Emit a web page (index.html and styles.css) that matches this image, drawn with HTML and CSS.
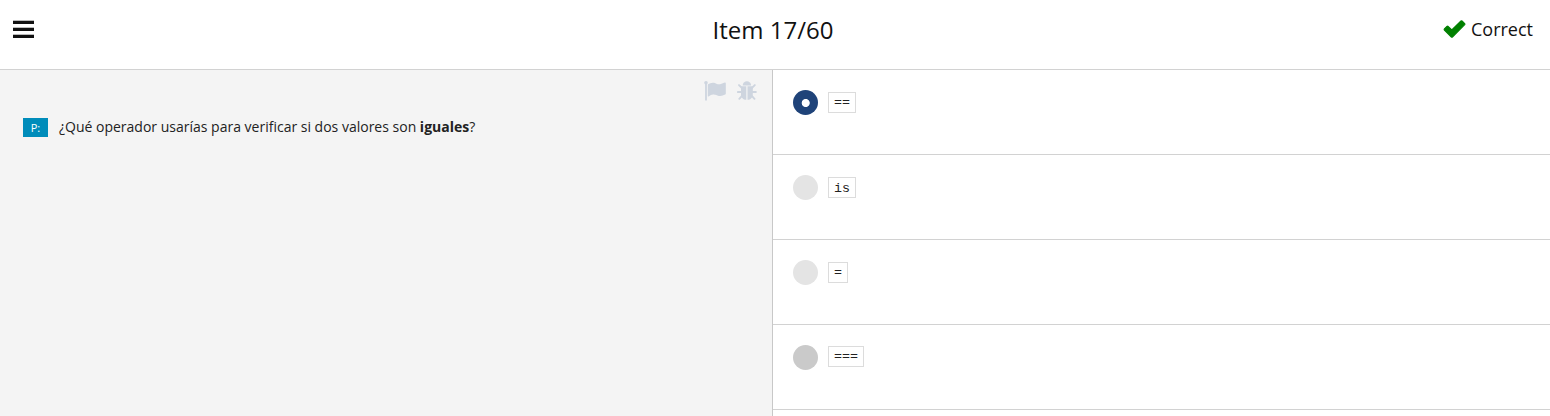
FILE: index.html
```html
<!DOCTYPE html>
<html lang="es">
<head>
<meta charset="utf-8">
<title>Item 17/60</title>
<link rel="stylesheet" href="styles.css">
</head>
<body>
<header class="topbar">
  <div class="menu"><span class="bar"></span><span class="bar"></span><span class="bar"></span></div>
  <h1 class="title">Item 17/60</h1>
  <div class="result">
    <svg class="check" viewBox="0 0 22 18"><path fill="#008000" stroke="#008000" stroke-width="1.2" stroke-linejoin="round" d="M1.4 8.9 4 6.3Q4.4 5.9 4.8 6.3L8.8 10 18 .9Q18.5.6 19 .9L21.7 3.6Q22.1 4.1 21.7 4.6L9.4 17Q8.9 17.4 8.4 17L1.4 10Q.9 9.4 1.4 8.9Z"/></svg>
    <span>Correct</span>
  </div>
</header>
<main class="content">
  <section class="question">
    <div class="tools">
      <svg class="flag" viewBox="0 0 22 20"><circle cx="2" cy="1.8" r="1.8"/><path d="M1.1 2H2.9V19.4H1.1Z"/><path d="M3.8 3.4C6 2.1 8 1.3 10 1.8 12.2 2.4 13.6 3.8 16 3.2 18.2 2.8 19.8 1.6 21 1.5Q21.8 1.5 21.8 2.2V12.8Q21.8 13.3 21.2 13.6C19 14.6 17 15.5 14.8 14.9 12.6 14.3 11.4 13.2 9.2 13.4 7.2 13.6 5.6 14.6 4.4 15.4Q3.8 15.7 3.8 15Z"/></svg>
      <svg class="bug" viewBox="0 0 20 20"><path d="M5.7 4.4A4.2 4.2 0 0 1 14.1 4.4Z"/><path d="M4.6 5.3H9.3V18.8C6.2 18.7 4 16.6 4 13.2V5.9ZM10.5 5.3H15.2L15.8 5.9V13.2C15.8 16.6 13.6 18.7 10.5 18.8Z"/><path class="legs" d="M5 7 2 4.1M14.8 7 17.8 4.1M5 11H.9M15 11H18.9M5.2 14.7 2.3 17.8M14.6 14.7 17.5 17.8"/></svg>
    </div>
    <div class="prompt"><span class="badge">P:</span><p class="text">¿Qué operador usarías para verificar si dos valores son <b>iguales</b>?</p></div>
  </section>
  <section class="answers">
    <div class="answer"><span class="radio selected"></span><code class="code">==</code></div>
    <div class="answer"><span class="radio"></span><code class="code is">is</code></div>
    <div class="answer"><span class="radio"></span><code class="code">=</code></div>
    <div class="answer last"><span class="radio hover"></span><code class="code">===</code></div>
  </section>
</main>
</body>
</html>
```
FILE: styles.css
```css
* { box-sizing: border-box; }
body {
  margin: 0;
  height: 416px;
  overflow: hidden;
  display: flex;
  flex-direction: column;
  background: #fff;
  color: #111;
  font-family: "Open Sans", "Noto Sans", sans-serif;
}
.topbar {
  flex: none;
  height: 70px;
  border-bottom: 1px solid #d2d2d2;
  display: grid;
  grid-template-columns: 1fr auto 1fr;
  align-items: start;
  padding: 0 17px 0 13px;
}
.menu { display: flex; flex-direction: column; gap: 4px; padding-top: 21px; }
.bar { width: 21px; height: 3px; background: #111; box-shadow: 0 -1px #bbb; }
.title { margin: 0; padding: 13px 0 0; font-size: 24px; line-height: 33px; font-weight: 400; }
.result {
  justify-self: end;
  display: flex;
  gap: 6px;
  padding-top: 17px;
  font-size: 18px;
  line-height: 25px;
}
.check { width: 22px; height: 18px; margin-top: 3px; overflow: visible; }
.content { flex: 1; display: flex; min-height: 0; }
.question { width: 773px; flex: none; background: #f4f4f4; border-right: 1px solid #c8c8c8; }
.tools { display: flex; justify-content: flex-end; gap: 11px; padding: 11px 15px 0 0; fill: #ced5df; }
.flag { width: 22px; height: 20px; }
.bug { width: 20px; height: 20px; }
.legs { fill: none; stroke: #ced5df; stroke-width: 1.9; stroke-linecap: round; }
.prompt { display: flex; gap: 11px; padding: 16px 0 0 23px; }
.badge {
  width: 25px;
  height: 19px;
  margin-top: 1px;
  background: #008cba;
  color: #fff;
  font-size: 11px;
  line-height: 20px;
  text-align: center;
}
.text { margin: 0; font-size: 14px; line-height: 20px; color: #222; white-space: nowrap; }
.answers { flex: 1; }
.answer {
  height: 85px;
  border-bottom: 1px solid #d2d2d2;
  display: flex;
  align-items: flex-start;
  gap: 10px;
  padding: 20px 0 0 20px;
}
.radio { width: 25px; height: 25px; border-radius: 50%; background: #e4e4e4; }
.radio.hover { background: #cacaca; }
.radio.selected { background: radial-gradient(circle at 12.7px 13px, #fff 3.6px, #1f4379 4.4px); }
.code {
  height: 21px;
  margin-top: 2px;
  border: 1px solid #dcdcdc;
  padding: 0 5px;
  font: 13.33px/19px "Liberation Mono", monospace;
  color: #222;
}
.code.is { line-height: 21px; }
.last .code { margin-top: 1px; }
```
